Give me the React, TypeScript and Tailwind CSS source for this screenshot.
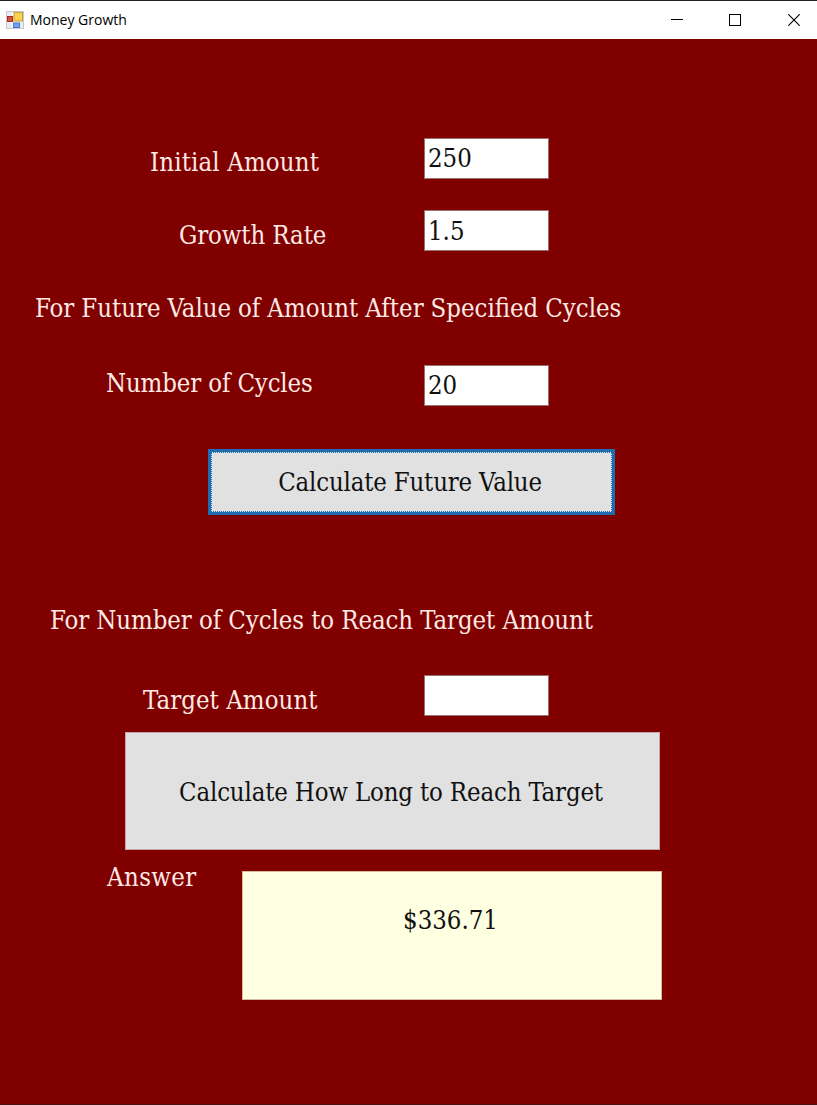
import type { ReactNode } from "react";

function Label({ className, children }: { className: string; children: ReactNode }) {
  return <span className={`block h-[30px] whitespace-nowrap leading-[30px] ${className}`}>{children}</span>;
}

function Field({ value, className = "pb-px" }: { value: string; className?: string }) {
  return (
    <input
      defaultValue={value}
      className={`block h-[41px] w-[125px] border border-[#9a7070] bg-white pl-[3px] text-[#101010] outline-none ${className}`}
    />
  );
}

function TitleBar() {
  return (
    <header className="flex h-[39px] items-center border-t border-[#202020] bg-white">
      <svg className="ml-[6px] h-[18px] w-[18px]" viewBox="0 0 18 18">
        <rect x="0.5" y="0.5" width="17" height="17" fill="#e9edf2" stroke="#c3c9d1" />
        <path d="M6.5 1v16M1 11.5h6" stroke="#fff" />
        <rect x="1.5" y="5.5" width="5" height="5" fill="#d2553f" stroke="#b02a1c" />
        <rect x="8" y="1.5" width="8.5" height="8.5" fill="#fbd04c" stroke="#c9a03a" />
        <rect x="7.5" y="12" width="6" height="4.5" fill="#6fa0ec" stroke="#4a78cc" />
      </svg>
      <span className="ml-[6px] mb-px font-['Open_Sans','Noto_Sans',sans-serif] text-[14px] text-black">Money Growth</span>
      <div className="ml-auto flex items-center pr-[17px]">
        <svg className="h-3 w-3" viewBox="0 0 12 12" shapeRendering="crispEdges">
          <path d="M0 5.5h12" stroke="#000" />
        </svg>
        <svg className="ml-[46px] h-3 w-3" viewBox="0 0 12 12" shapeRendering="crispEdges">
          <rect x="0.5" y="0.5" width="11" height="11" fill="none" stroke="#000" />
        </svg>
        <svg className="ml-[47px] h-3 w-3" viewBox="0 0 12 12">
          <path d="M0.3 0.3L11.7 11.7M11.7 0.3L0.3 11.7" stroke="#000" strokeWidth="1.1" />
        </svg>
      </div>
    </header>
  );
}

export default function App() {
  return (
    <div className="flex h-[1105px] w-[817px] flex-col overflow-hidden bg-[#800000]">
      <TitleBar />
      <main className="flex-1 border-b border-[#4a1010] font-['DejaVu_Serif_Condensed','DejaVu_Serif',serif] text-[25.5px] text-[#ffe9e4]">
        <div className="mt-[99px] flex">
          <Label className="ml-[150px] mt-[9px] w-[274px] tracking-[0.15px]">Initial Amount</Label>
          <Field value="250" />
        </div>
        <div className="mt-[31px] flex">
          <Label className="ml-[179px] mt-[10px] w-[245px] tracking-[-0.1px]">Growth Rate</Label>
          <Field value="1.5" className="pt-px" />
        </div>
        <Label className="ml-[35px] mt-[42px] [word-spacing:-0.3px]">For Future Value of Amount After Specified Cycles</Label>
        <div className="mt-[42px] flex">
          <Label className="ml-[106px] mt-[3px] w-[318px] tracking-[-0.13px]">Number of Cycles</Label>
          <Field value="20" />
        </div>
        <button className="ml-[208px] mt-[43px] block h-[66px] w-[407px] border-[3px] border-[#1f6cb0] bg-[#e1e1e1] text-[#101010]">
          <span className="flex h-full items-center justify-center border border-dotted border-[#1f6cb0] pr-[3px] pt-px tracking-[-0.17px]">
            Calculate Future Value
          </span>
        </button>
        <Label className="ml-[50px] mt-[90px] tracking-[-0.07px]">For Number of Cycles to Reach Target Amount</Label>
        <div className="mt-[40px] flex">
          <Label className="ml-[143px] mt-[10px] w-[281px] tracking-[0.07px]">Target Amount</Label>
          <Field value="" />
        </div>
        <button className="ml-[125px] mt-4 block h-[118px] w-[535px] border border-[#c4a8a8] bg-[#e1e1e1] pr-[3px] pt-[3px] tracking-[-0.15px] text-[#101010]">
          Calculate How Long to Reach Target
        </button>
        <div className="mt-3 flex">
          <Label className="ml-[107px] w-[135px] tracking-[0.4px]">Answer</Label>
          <output className="mt-[9px] block h-[129px] w-[420px] border border-[#d8b8a0] bg-[#ffffe1] pr-[3px] pt-[33px] text-center leading-[30px] text-[#101010]">
            $336.71
          </output>
        </div>
      </main>
    </div>
  );
}
